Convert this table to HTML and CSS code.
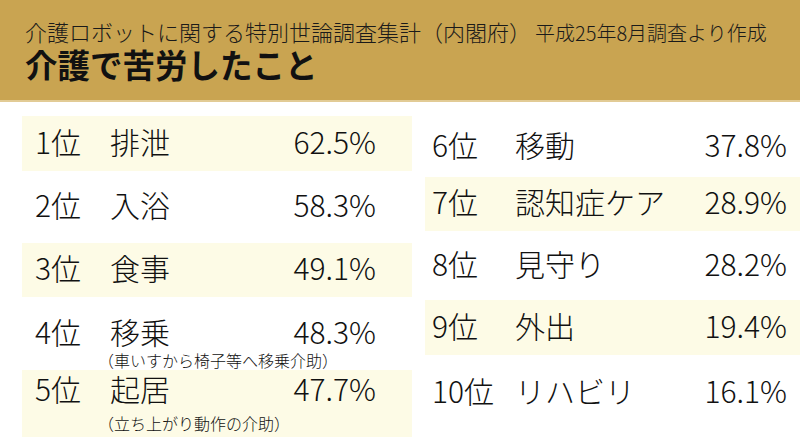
FILE: index.html
```html
<!DOCTYPE html>
<html lang="ja">
<head>
<meta charset="utf-8">
<title>介護で苦労したこと</title>
<link rel="stylesheet" href="styles.css">
</head>
<body>
<header class="banner">
  <p class="source">介護ロボットに関する特別世論調査集計（内閣府）<span class="note">平成25年8月調査より作成</span></p>
  <h1 class="title">介護で苦労したこと</h1>
</header>
<main class="board">
  <section class="col col-left">
    <div class="row shade h1"><span class="rank">1位</span><span class="label">排泄</span><span class="pct">62.5%</span></div>
    <div class="row h2"><span class="rank">2位</span><span class="label">入浴</span><span class="pct">58.3%</span></div>
    <div class="row shade h3"><span class="rank">3位</span><span class="label">食事</span><span class="pct">49.1%</span></div>
    <div class="row sub h4">
      <div class="main"><span class="rank">4位</span><span class="label">移乗</span><span class="pct">48.3%</span></div>
      <p class="detail">（車いすから椅子等へ移乗介助）</p>
    </div>
    <div class="row sub shade h5">
      <div class="main"><span class="rank">5位</span><span class="label">起居</span><span class="pct">47.7%</span></div>
      <p class="detail detail-low">（立ち上がり動作の介助）</p>
    </div>
  </section>
  <section class="col col-right">
    <div class="row r6"><span class="rank">6位</span><span class="label">移動</span><span class="pct">37.8%</span></div>
    <div class="row shade r7"><span class="rank">7位</span><span class="label">認知症ケア</span><span class="pct">28.9%</span></div>
    <div class="row r8"><span class="rank">8位</span><span class="label">見守り</span><span class="pct">28.2%</span></div>
    <div class="row shade r9"><span class="rank">9位</span><span class="label">外出</span><span class="pct">19.4%</span></div>
    <div class="row r10"><span class="rank">10位</span><span class="label">リハビリ</span><span class="pct">16.1%</span></div>
  </section>
</main>
</body>
</html>
```

FILE: styles.css
```css
* { box-sizing: border-box; }
html, body { margin: 0; padding: 0; background: #ffffff; }
body {
  width: 800px;
  height: 444px;
  overflow: hidden;
  font-family: "Noto Sans CJK JP", "Noto Sans", sans-serif;
  font-weight: 300;
  color: #111111;
}
.banner {
  height: 102px;
  background: #c9a451;
  border-bottom: 2px solid #e2cb95;
  padding: 18px 0 0 25px;
}
.source {
  margin: 0;
  font-size: 22px;
  line-height: 26px;
  color: #1a1a1a;
  white-space: nowrap;
}
.note {
  font-size: 20px;
  margin-left: 4px;
}
.title {
  margin: 0;
  font-size: 32.5px;
  line-height: 36px;
  font-weight: 700;
  color: #111111;
}
.board {
  display: flex;
  gap: 13px;
  padding: 14px 0 0 22px;
}
.col { display: flex; flex-direction: column; }
.col-left { width: 390px; }
.col-right { width: 375px; }
.row {
  display: flex;
  align-items: center;
  font-size: 30px;
  line-height: 32px;
  padding-bottom: 6px;
}
.shade { background: #fdfbe6; }
.main { display: flex; align-items: center; width: 100%; }
.col-left .row { padding-left: 13px; padding-right: 36px; }
.col-right .row { padding-left: 7px; padding-right: 13px; }
.col-left .rank { width: 75px; }
.col-right .rank { width: 83px; }
.rank, .label { flex: none; }
.pct { margin-left: auto; }
.sub { flex-direction: column; align-items: stretch; justify-content: flex-start; padding-bottom: 0; }
.detail {
  margin: 4px 0 0 -12px;
  padding-left: 75px;
  font-size: 16px;
  line-height: 18px;
}
.detail-low { margin-top: 10px; }
.h1 { height: 55px; }
.h2 { height: 72px; }
.h3 { height: 54px; }
.h4 { height: 73px; padding-top: 18px; }
.h5 { height: 67px; padding-top: 2px; }
.r6 { height: 61px; }
.r7 { height: 54px; }
.r8 { height: 69px; }
.r9 { height: 55px; }
.r10 { height: 76px; }
```
